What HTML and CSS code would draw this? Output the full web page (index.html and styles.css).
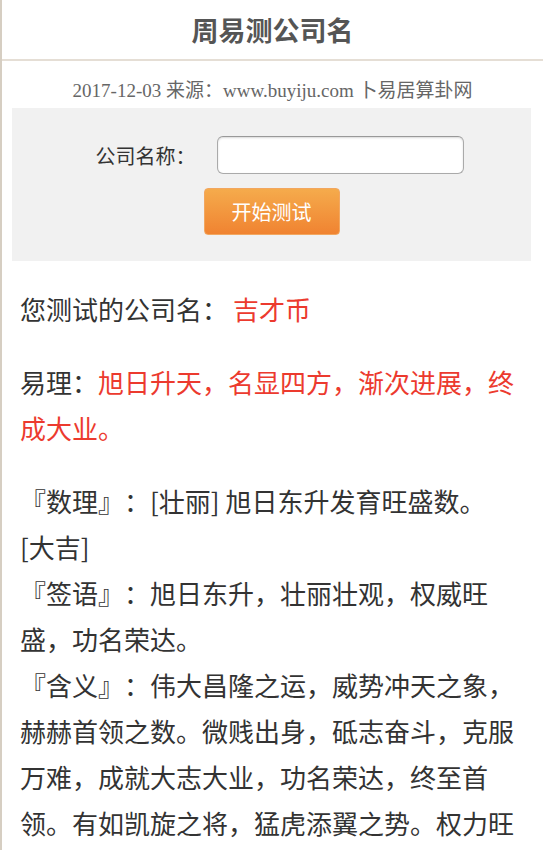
FILE: index.html
```html
<!DOCTYPE html>
<html lang="zh-CN">
<head>
  <meta charset="UTF-8" />
  <meta name="viewport" content="width=device-width, initial-scale=1.0" />
  <title>周易测公司名</title>
  <link rel="stylesheet" href="styles.css">
</head>
<body>
  <div class="page">
    <!-- Header -->
    <div class="header">
      <h1>周易测公司名</h1>
    </div>

    <div class="info">2017-12-03 来源：www.buyiju.com 卜易居算卦网</div>

    <!-- Test form -->
    <form class="test-box">
      <div class="row">
        <label for="cname">公司名称：</label>
        <input type="text" id="cname" class="text-input">
      </div>
      <button type="button" class="btn">开始测试</button>
    </form>

    <!-- Result -->
    <div class="result">
      <p>您测试的公司名：<span class="red">吉才币</span></p>
      <p>易理：<span class="red">旭日升天，名显四方，渐次进展，终成大业。</span></p>
      <p>『数理』：[壮丽] 旭日东升发育旺盛数。[大吉]<br>『签语』：旭日东升，壮丽壮观，权威旺盛，功名荣达。<br>『含义』：伟大昌隆之运，威势冲天之象，赫赫首领之数。微贱出身，砥志奋斗，克服万难，成就大志大业，功名荣达，终至首领。有如凯旋之将，猛虎添翼之势。权力旺盛，智谋超群，名利双收，富贵荣华。</p>
    </div>
  </div>
</body>
</html>
```

FILE: styles.css
```css
body {
  margin: 0;
  padding: 0;
  background: #fff;
  font-family: "Noto Sans CJK SC", sans-serif;
  color: #333;
  text-spacing-trim: space-all;
}

.page {
  border-left: 2px solid #d6cec2;
  min-height: 850px;
}

.header {
  height: 59px;
  border-bottom: 2px solid #e5ded5;
  text-align: center;
}

.header h1 {
  margin: 0;
  font-size: 27px;
  line-height: 59px;
  font-weight: bold;
  color: #555;
}

.info {
  margin: 15px 0 2px;
  line-height: 30px;
  text-align: center;
  font-family: "Liberation Serif", "Noto Sans CJK SC", serif;
  font-size: 19px;
  color: #666;
}

/* form box */
.test-box {
  margin: 0 12px 0 10px;
  padding: 28px 0 26px;
  background: #f1f1f1;
}

.row {
  display: flex;
  justify-content: center;
  align-items: center;
  gap: 21px;
  padding-left: 16px;
}

.row label {
  font-size: 20px;
  color: #333;
}

.text-input {
  width: 247px;
  height: 38px;
  box-sizing: border-box;
  border: 1px solid #aaa;
  border-top-color: #999;
  border-radius: 6px;
  background: #fff;
  box-shadow: inset 0 1px 2px rgba(0, 0, 0, 0.15);
}

.btn {
  display: block;
  margin: 14px auto 0;
  width: 136px;
  height: 47px;
  border: 1px solid #f2a760;
  border-radius: 4px;
  background: linear-gradient(#f5ab4c, #f08331);
  color: #fff;
  font-family: "Noto Sans CJK SC", sans-serif;
  font-size: 20px;
  cursor: pointer;
}

/* result text */
.result {
  padding: 25px 25px 0 18px;
  font-size: 26px;
  line-height: 46px;
  color: #333;
}

.result p {
  margin: 0 0 27px;
}

.red {
  color: #ec3a2e;
  margin-left: 5px;
}

.result p + p .red {
  margin-left: 0;
}
```
